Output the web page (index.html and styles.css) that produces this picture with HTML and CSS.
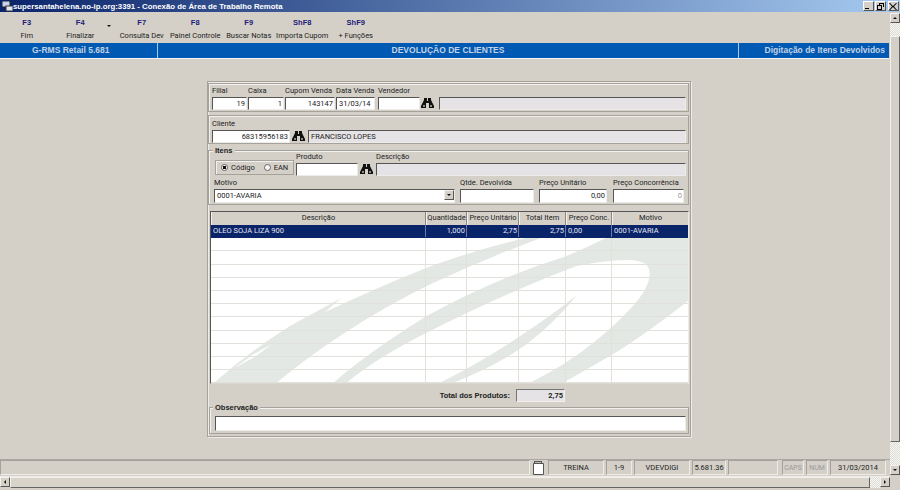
FILE: index.html
```html
<html lang="pt-BR">
  <head>
    <meta charset="UTF-8" />
    <meta name="viewport" content="width=device-width, initial-scale=1.0" />
    <title>Devolução de Clientes</title>
    <link rel="stylesheet" href="styles.css">
  </head>
  <body>
    <svg class="defs" width="0" height="0">
      <symbol id="binoc" viewBox="0 0 13 12">
        <path d="M3 1h3v3h1V1h3v2l3 6v2H8V6H5v5H0V9l3-6z" fill="#111" />
        <path d="M2 8h2v2H2zM9 8h2v2H9z" fill="#8a8a8a" />
      </symbol>
    </svg>

    <div class="titlebar">
      <svg class="title-icon" width="11" height="11" viewBox="0 0 11 11">
        <rect x="0" y="0" width="8" height="6" fill="#c8d4e8" stroke="#223" stroke-width="1" />
        <rect x="4" y="5" width="7" height="5" fill="#e8e8e8" stroke="#334" stroke-width="1" />
      </svg>
      <span class="title-text">supersantahelena.no-ip.org:3391 - Conexão de Área de Trabalho Remota</span>
      <div class="win-buttons">
        <div class="win-btn"><svg width="9" height="7" viewBox="0 0 9 7"><path d="M1 5h4v1H1z" fill="#000" /></svg></div>
        <div class="win-btn"><svg width="9" height="7" viewBox="0 0 9 7"><path d="M3 0h5v4H7V1H4v1H3zM1 2h5v5H1zm1 1v3h3V3z" fill="#000" /></svg></div>
        <div class="win-btn win-close"><svg width="9" height="7" viewBox="0 0 9 7"><path d="M1 0l3 3 3-3 1 0-3 3.500 3 3.500H7L4 4 1 7H0l3-3.500L0 0z" fill="#000" /></svg></div>
      </div>
    </div>

    <div class="workspace">
      <div class="main">
        <div class="toolbar">
          <div class="tool"><b>F3</b><span>Fim</span></div>
          <div class="tool"><b>F4</b><span>Finalizar</span></div>
          <div class="tool-arrow"></div>
          <div class="tool"><b>F7</b><span>Consulta Dev</span></div>
          <div class="tool"><b>F8</b><span>Painel Controle</span></div>
          <div class="tool"><b>F9</b><span>Buscar Notas</span></div>
          <div class="tool"><b>ShF8</b><span>Importa Cupom</span></div>
          <div class="tool"><b>ShF9</b><span>+ Funções</span></div>
        </div>

        <div class="band">
          <div class="band-left">G-RMS Retail 5.681</div>
          <div class="band-center">DEVOLUÇÃO DE CLIENTES</div>
          <div class="band-right">Digitação de Itens Devolvidos</div>
        </div>

        <div class="content">
          <div class="panel">
            <div class="group group-top">
              <div class="field w35"><label>Filial</label><div class="input num">19</div></div>
              <div class="field w36"><label>Caixa</label><div class="input num">1</div></div>
              <div class="field w50"><label>Cupom Venda</label><div class="input num">143147</div></div>
              <div class="field w39"><label>Data Venda</label><div class="input">31/03/14</div></div>
              <div class="field w42 gap-left"><label>Vendedor</label><div class="input"></div></div>
              <svg class="binoc"><use href="#binoc" /></svg>
              <div class="input readonly grow gap-desc"></div>
            </div>

            <div class="group group-client">
              <div class="field w78"><label>Cliente</label><div class="input num">68315956183</div></div>
              <svg class="binoc binoc-client"><use href="#binoc" /></svg>
              <div class="input readonly grow gap-name">FRANCISCO LOPES</div>
            </div>

            <div class="group group-items">
              <div class="legend">Itens</div>
              <div class="row row-product">
                <div class="radio-box">
                  <span class="radio checked"></span><span class="radio-label">Código</span>
                  <span class="radio radio-ean"></span><span class="radio-label">EAN</span>
                </div>
                <div class="field w62"><label>Produto</label><div class="input"></div></div>
                <svg class="binoc binoc-product"><use href="#binoc" /></svg>
                <div class="field grow gap-descr"><label>Descrição</label><div class="input readonly"></div></div>
              </div>
              <div class="row row-reason">
                <div class="field w241"><label>Motivo</label>
                  <div class="input select">0001-AVARIA<div class="sb-btn select-btn"><i class="arrow-down"></i></div></div>
                </div>
                <div class="field w74 gap5"><label>Qtde. Devolvida</label><div class="input tall"></div></div>
                <div class="field w68 gap5"><label>Preço Unitário</label><div class="input tall num">0,00</div></div>
                <div class="field w71 gap6"><label>Preço Concorrência</label><div class="input tall num muted">0</div></div>
              </div>
            </div>

            <div class="grid">
              <div class="grid-row grid-head">
                <div>Descrição</div><div>Quantidade</div><div>Preço Unitário</div><div>Total Item</div><div>Preço Conc.</div><div>Motivo</div>
              </div>
              <div class="grid-body">
                <svg class="watermark" viewBox="0 0 1440 450" width="480" height="150">
                  <path fill="#e4e8e4" d="M12 440Q120 345 240 270L395 185L345 228Q500 155 650 95Q800 40 950 5L1010 0Q830 65 650 150Q400 275 200 440z" />
                  <path fill="#fff" d="M75 395L130 355L185 325L135 362z" />
                  <path fill="#e4e8e4" d="M370 440Q480 345 650 240Q860 125 1070 60Q1140 30 1200 0L1440 0L1440 190Q1300 300 1200 360L1060 440L960 440Q1070 385 1150 320Q1250 240 1300 170Q1345 90 1285 75Q1240 65 1100 90Q900 165 650 290Q500 365 410 440z" />
                  <path fill="#e4e8e4" d="M690 440Q800 385 900 320Q1010 250 1100 178Q1040 255 950 325Q850 395 730 440z" />
                </svg>
                <div class="grid-row selected">
                  <div>OLEO SOJA LIZA 900</div><div class="num">1,000</div><div class="num">2,75</div><div class="num">2,75</div><div>0,00</div><div>0001-AVARIA</div>
                </div>
                <div class="grid-row"><div></div><div></div><div></div><div></div><div></div><div></div></div>
                <div class="grid-row"><div></div><div></div><div></div><div></div><div></div><div></div></div>
                <div class="grid-row"><div></div><div></div><div></div><div></div><div></div><div></div></div>
                <div class="grid-row"><div></div><div></div><div></div><div></div><div></div><div></div></div>
                <div class="grid-row"><div></div><div></div><div></div><div></div><div></div><div></div></div>
                <div class="grid-row"><div></div><div></div><div></div><div></div><div></div><div></div></div>
                <div class="grid-row"><div></div><div></div><div></div><div></div><div></div><div></div></div>
                <div class="grid-row"><div></div><div></div><div></div><div></div><div></div><div></div></div>
                <div class="grid-row"><div></div><div></div><div></div><div></div><div></div><div></div></div>
                <div class="grid-row"><div></div><div></div><div></div><div></div><div></div><div></div></div>
                <div class="grid-row"><div></div><div></div><div></div><div></div><div></div><div></div></div>
              </div>
            </div>

            <div class="total">
              <span class="total-label">Total dos Produtos:</span>
              <div class="input readonly num total-value">2,75</div>
            </div>

            <div class="group group-obs">
              <div class="legend">Observação</div>
              <div class="input obs-input"></div>
            </div>
          </div>
        </div>

        <div class="status">
          <div class="st st-grow"></div>
          <div class="st-icon">
            <svg width="14" height="14" viewBox="0 0 14 14">
              <path d="M1.500 2.500h10v11h-10z" fill="#fff" stroke="#555" />
              <path d="M2 0h8v3H2z" fill="#555" />
              <path d="M3 1h6v1H3z" fill="#bbb" />
            </svg>
          </div>
          <div class="st w56">TREINA</div>
          <div class="st w26">1-9</div>
          <div class="st w56">VDEVDIGI</div>
          <div class="st w34">5.681.36</div>
          <div class="st w50"></div>
          <div class="st w22 st-off st-caps">CAPS</div>
          <div class="st w22 st-off">NUM</div>
          <div class="st w56">31/03/2014</div>
        </div>
      </div>

      <div class="vscroll">
        <div class="sb-btn"><i class="arrow-up"></i></div>
        <div class="dither d-top"></div>
        <div class="thumb v-thumb"></div>
        <div class="dither d-bottom"></div>
        <div class="sb-btn"><i class="arrow-down"></i></div>
      </div>
    </div>

    <div class="hscroll">
      <div class="sb-btn"><i class="arrow-left"></i></div>
      <div class="thumb h-thumb"></div>
      <div class="dither h-dither"></div>
      <div class="sb-btn"><i class="arrow-right"></i></div>
    </div>
  </body>
</html>
```

FILE: styles.css
```css
* {
  box-sizing: border-box;
}

html,
body {
  margin: 0;
  height: 490px;
  overflow: hidden;
}

body {
  background-color: #d4d0c8;
  color: #222;
  font-family: Roboto, "Liberation Sans", Arial, sans-serif;
  font-size: 7.5px;
  display: flex;
  flex-direction: column;
}

.defs {
  position: absolute;
}

/* title bar */
.titlebar {
  height: 12px;
  flex: none;
  display: flex;
  align-items: center;
  background: linear-gradient(to right, #0a246a, #a6caf0);
  color: #fff;
}

.title-icon {
  margin-left: 2px;
  flex: none;
}

.title-text {
  font-family: "Liberation Sans", Arial, sans-serif;
  font-weight: bold;
  font-size: 7.8px;
  white-space: nowrap;
}

.win-buttons {
  margin-left: auto;
  display: flex;
  gap: 1px;
  margin-right: 1px;
}

.win-btn {
  width: 11px;
  height: 10px;
  background-color: #d4d0c8;
  border: 1px solid;
  border-color: #fff #555 #555 #fff;
  display: flex;
  align-items: center;
  justify-content: center;
}

.win-close {
  margin-left: 1px;
}

/* page frame */
.workspace {
  height: 463px;
  flex: none;
  display: flex;
}

.main {
  width: 890px;
  display: flex;
  flex-direction: column;
}

/* toolbar */
.toolbar {
  height: 31px;
  flex: none;
  display: flex;
}

.tool {
  width: 53.5px;
  flex: none;
  display: flex;
  flex-direction: column;
  align-items: center;
  padding-top: 6px;
  white-space: nowrap;
}

.tool b {
  color: #1a1a78;
  font-family: "Liberation Sans", Arial, sans-serif;
  font-size: 7.5px;
  line-height: 10px;
}

.tool span {
  line-height: 10px;
  margin-top: 3px;
}

.tool-arrow {
  width: 8px;
  flex: none;
  position: relative;
}

.tool-arrow::after {
  content: "";
  position: absolute;
  left: 0;
  top: 13px;
  border: 2px solid transparent;
  border-top: 2px solid #111;
}

/* blue band */
.band {
  height: 16px;
  flex: none;
  display: flex;
  background-color: #0059b3;
  border-bottom: 1px solid #f4f4f4;
  color: #c4d2e4;
  font-family: "Liberation Sans", Arial, sans-serif;
  font-weight: bold;
  font-size: 8.5px;
  line-height: 15px;
  margin-right: 1px;
}

.band-left {
  width: 158px;
  padding-left: 32px;
  border-right: 1px solid #a8c8ea;
}

.band-center {
  width: 581px;
  text-align: center;
  border-right: 1px solid #a8c8ea;
}

.band-right {
  flex: 1;
  text-align: right;
  padding-right: 4px;
}

/* form */
.content {
  flex: 1;
  padding: 22px 0 0 207px;
}

.panel {
  width: 484px;
  height: 356px;
  border: 1px solid #a5a29b;
  box-shadow: inset 1px 1px 0 #eeece8, 1px 1px 0 #eeece8;
  padding: 1px 1px 0 0;
}

.group {
  position: relative;
  border: 1px solid #a5a29b;
  box-shadow: inset 1px 1px 0 #f2f1ed;
}

.group-top {
  height: 29px;
  width: 481px;
  padding: 2px 2px 0 3px;
  display: flex;
  align-items: flex-end;
  gap: 1px;
  padding-bottom: 1px;
}

.group-client {
  height: 29px;
  margin-top: 3px;
  width: 481px;
  padding: 2px 2px 0 3px;
  display: flex;
  align-items: flex-end;
}

.group-client label {
  height: 12px;
  line-height: 9px;
}

.group-items {
  height: 55px;
  margin-top: 6px;
  padding: 1px 2px 0 5px;
}

.legend {
  position: absolute;
  left: 4px;
  top: -5px;
  padding: 0 2px;
  background-color: #d4d0c8;
  font-family: "Liberation Sans", Arial, sans-serif;
  font-weight: bold;
  line-height: 9px;
}

.row {
  display: flex;
  align-items: flex-end;
}

.row-reason {
  margin-top: 2px;
}

.field {
  display: flex;
  flex-direction: column;
  flex: none;
}

.field label {
  height: 11px;
  line-height: 10px;
  white-space: nowrap;
}

.grow {
  flex: 1;
}

.w35 { width: 35px; }
.w36 { width: 36px; }
.w39 { width: 39px; }
.w42 { width: 42px; }
.w50 { width: 50px; }
.w62 { width: 62px; }
.w68 { width: 68px; }
.w71 { width: 71px; }
.w74 { width: 74px; }
.w78 { width: 78px; }
.w241 { width: 241px; }
.w22 { width: 22px; }
.w26 { width: 26px; }
.w34 { width: 34px; }
.w56 { width: 56px; }

.gap-left { margin-left: 2px; }
.gap-desc { margin-left: 4px; }
.gap-name { margin-left: 3px; }
.gap-descr { margin-left: 3px; }
.gap5 { margin-left: 5px; }
.gap6 { margin-left: 6px; }

.input {
  height: 13px;
  line-height: 12px;
  background-color: #fff;
  border: 1px solid;
  border-color: #555 #eeece8 #eeece8 #555;
  padding: 0 1px 0 2px;
  white-space: nowrap;
  overflow: hidden;
}

.tall {
  height: 14px;
}

.readonly {
  background-color: #e6e3e6;
}

.num {
  text-align: right;
}

.muted {
  color: #999;
}

.binoc {
  width: 13px;
  height: 12px;
  flex: none;
  margin-bottom: 1px;
}

.binoc-client {
  margin-left: 2px;
}

.binoc-product {
  margin-left: 2px;
}

.radio-box {
  width: 79px;
  height: 15px;
  margin-left: 1px;
  margin-right: 2px;
  margin-bottom: 1px;
  flex: none;
  border: 1px solid #a5a29b;
  box-shadow: inset 1px 1px 0 #f2f1ed;
  display: flex;
  align-items: center;
  padding-left: 5px;
}

.radio {
  width: 7px;
  height: 7px;
  border-radius: 50%;
  background-color: #f6f6f6;
  border: 1px solid #666;
  flex: none;
  margin-right: 3px;
}

.radio.checked {
  background: radial-gradient(circle, #111 1.5px, #f6f6f6 2px);
}

.radio-ean {
  margin-left: 9px;
}

.select {
  height: 14px;
  position: relative;
}

.select-btn {
  position: absolute;
  right: 0;
  top: 0;
  height: 12px;
  width: 10px;
}

/* items grid */
.grid {
  width: 479px;
  height: 173px;
  margin: 6px 0 0 2px;
  border: 1px solid;
  border-color: #555 #eeece8 #d9d7d0 #555;
  background-color: #fff;
}

.grid-row {
  display: grid;
  grid-template-columns: 215px 41px 52px 47px 46px 1fr;
  height: 13.2px;
  line-height: 12px;
  border-bottom: 1px solid #e2e0da;
  position: relative;
}

.grid-row > div {
  border-right: 1px solid #e2e0da;
  padding: 0 1px 0 2px;
  white-space: nowrap;
  overflow: hidden;
}

.grid-row > div:last-child {
  border-right: none;
}

.grid-head {
  height: 13px;
  background-color: #d4d0c8;
  border-bottom: none;
  text-align: center;
}

.grid-head > div {
  border-left: 1px solid #f2f1ed;
  border-right: 1px solid #8a8782;
  padding: 0;
}

.grid-body {
  position: relative;
  overflow: hidden;
  height: 158.4px;
}

.watermark {
  position: absolute;
  left: -1px;
  top: 11px;
}

.selected {
  background-color: #0a246a;
  color: #e4e6f0;
  border-bottom-color: #0a246a;
}

.selected > div {
  border-right-color: #6a7ba6;
}

/* totals */
.total {
  display: flex;
  justify-content: flex-end;
  align-items: center;
  height: 13px;
  margin-top: 5px;
  padding-right: 124px;
}

.total-label {
  font-family: "Liberation Sans", Arial, sans-serif;
  font-weight: bold;
  margin-right: 6px;
}

.total-value {
  width: 49px;
  flex: none;
  font-weight: bold;
  border-color: #777 #f2f1ed #f2f1ed #777;
}

.group-obs {
  height: 27px;
  width: 480px;
  margin: 5px 0 0 1px;
  padding: 8px 2px 0 5px;
}

.group-obs .legend {
  left: 3px;
}

.obs-input {
  height: 15px;
}

/* status bar */
.status {
  height: 16px;
  flex: none;
  display: flex;
  gap: 2px;
  border-top: 1px solid #aaa7a0;
  padding-right: 4px;
}

.st {
  flex: none;
  height: 15px;
  line-height: 14px;
  text-align: center;
  border: 1px solid;
  border-color: #a5a29b #eeece8 #eeece8 #a5a29b;
  white-space: nowrap;
}

.st-grow {
  flex: 1;
}

.st-icon {
  width: 14px;
  flex: none;
  line-height: 0;
  padding-top: 1px;
}

.st-off {
  color: #9a9a9a;
  font-size: 7px;
}

.st-caps {
  margin-left: 2px;
}

/* scrollbars */
.sb-btn {
  width: 10px;
  height: 10px;
  flex: none;
  background-color: #d4d0c8;
  border: 1px solid;
  border-color: #f2f1ed #555 #555 #f2f1ed;
  display: flex;
  align-items: center;
  justify-content: center;
}

.arrow-up,
.arrow-down,
.arrow-left,
.arrow-right {
  display: block;
  width: 0;
  height: 0;
  border: 2.5px solid transparent;
}

.arrow-up {
  border-bottom-color: #111;
  border-top-width: 0;
}

.arrow-down {
  border-top-color: #111;
  border-bottom-width: 0;
}

.arrow-left {
  border-right-color: #111;
  border-left-width: 0;
}

.arrow-right {
  border-left-color: #111;
  border-right-width: 0;
}

.dither {
  background-color: #ecebe7;
  background-image: repeating-conic-gradient(#f7f6f3 0 25%, #dedcd6 0 50%);
  background-size: 2px 2px;
}

.thumb {
  background-color: #d4d0c8;
  border: 1px solid;
  border-color: #f2f1ed #666 #666 #f2f1ed;
}

.vscroll {
  width: 10px;
  flex: none;
  display: flex;
  flex-direction: column;
  padding-top: 1px;
}

.d-top {
  height: 13px;
  flex: none;
}

.v-thumb {
  height: 406px;
  flex: none;
}

.d-bottom {
  flex: 1;
}

.hscroll {
  height: 12px;
  width: 890px;
  flex: none;
  display: flex;
  margin-top: 1px;
  border-top: 1px solid #eeece8;
}

.h-thumb {
  flex: 1;
  background-color: #d8d4ca;
}

.h-dither {
  width: 10px;
  flex: none;
}
```
